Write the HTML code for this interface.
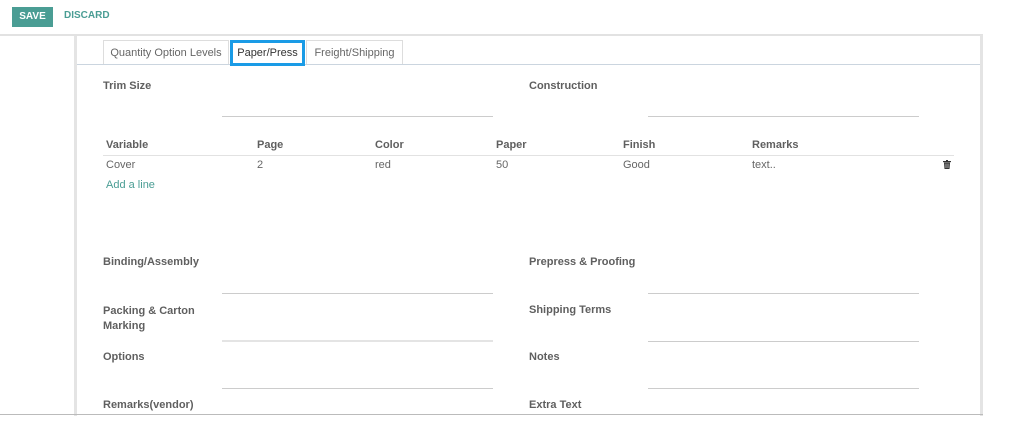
<!DOCTYPE html>
<html><head><meta charset="utf-8"><style>
body{margin:0;width:1016px;height:446px;background:#fff;font-family:"Liberation Sans",sans-serif;position:relative;overflow:hidden;color:#666}
.a{position:absolute}
.lbl{position:absolute;font-size:11px;font-weight:bold;color:#5f5f5f}
.ln{position:absolute;height:1px;background:#ccc}
.td{position:absolute;font-size:11px;color:#666}
.th{position:absolute;font-size:11px;font-weight:bold;color:#5f5f5f}
.tab{position:absolute;top:40px;height:24px;border:1px solid #ddd;border-bottom:none;font-size:11px;color:#666;text-align:center;line-height:24px;box-sizing:border-box;background:#fff}
</style></head><body>
<div class="a" style="left:12px;top:7px;width:41px;height:20px;background:#4a9d94;color:#fff;font-size:10px;font-weight:bold;text-align:center;line-height:20px">SAVE</div>
<div class="a" style="left:64px;top:10px;font-size:10px;font-weight:bold;color:#4a9d94">DISCARD</div>
<div class="a" style="left:0;top:34px;width:983px;height:2px;background:#e2e2e2"></div>
<div class="a" style="left:74px;top:36px;width:3px;height:380px;background:#e4e4e4"></div>
<div class="a" style="left:980px;top:35px;width:3px;height:381px;background:#e4e4e4"></div>
<div class="a" style="left:0;top:414px;width:983px;height:1px;background:#bbb"></div>
<div class="a" style="left:77px;top:64px;width:903px;height:1px;background:#cbd5df"></div>
<div class="tab" style="left:103px;width:126px">Quantity Option Levels</div>
<div class="tab" style="left:230px;top:40px;width:75px;height:26px;border:3px solid #1a9be6;color:#333;line-height:20px">Paper/Press</div>
<div class="tab" style="left:306px;width:97px">Freight/Shipping</div>
<div class="lbl" style="left:103px;top:80px">Trim Size</div>
<div class="ln" style="left:222px;top:116px;width:271px"></div>
<div class="lbl" style="left:529px;top:80px">Construction</div>
<div class="ln" style="left:648px;top:116px;width:271px"></div>
<div class="th" style="left:106px;top:139px">Variable</div>
<div class="th" style="left:257px;top:139px">Page</div>
<div class="th" style="left:375px;top:139px">Color</div>
<div class="th" style="left:496px;top:139px">Paper</div>
<div class="th" style="left:623px;top:139px">Finish</div>
<div class="th" style="left:752px;top:139px">Remarks</div>
<div class="ln" style="left:103px;top:155px;width:851px;background:#e2e2e2"></div>
<div class="td" style="left:106px;top:159px">Cover</div>
<div class="td" style="left:257px;top:159px">2</div>
<div class="td" style="left:375px;top:159px">red</div>
<div class="td" style="left:496px;top:159px">50</div>
<div class="td" style="left:623px;top:159px">Good</div>
<div class="td" style="left:752px;top:159px">text..</div>
<svg class="a" style="left:943px;top:160px" width="8" height="9" viewBox="0 0 8 9"><rect x="0" y="1" width="8" height="1.2" fill="#333"/><rect x="3" y="0" width="2" height="1" fill="#333"/><path d="M1 2.5h6l-.5 6.5h-5z" fill="#333"/><path d="M3 3.5v4.5M5 3.5v4.5" stroke="#fff" stroke-width=".6"/></svg>
<div class="td" style="left:106px;top:179px;color:#4a9d94">Add a line</div>
<div class="lbl" style="left:103px;top:256px">Binding/Assembly</div>
<div class="ln" style="left:222px;top:293px;width:271px"></div>
<div class="lbl" style="left:529px;top:256px">Prepress &amp; Proofing</div>
<div class="ln" style="left:648px;top:293px;width:271px"></div>
<div class="lbl" style="left:103px;top:304px;line-height:15px">Packing &amp; Carton<br>Marking</div>
<div class="ln" style="left:222px;top:340px;width:271px;height:2px;background:#e4e4e4"></div>
<div class="lbl" style="left:529px;top:304px">Shipping Terms</div>
<div class="ln" style="left:648px;top:341px;width:271px"></div>
<div class="lbl" style="left:103px;top:351px">Options</div>
<div class="ln" style="left:222px;top:388px;width:271px"></div>
<div class="lbl" style="left:529px;top:351px">Notes</div>
<div class="ln" style="left:648px;top:388px;width:271px"></div>
<div class="lbl" style="left:103px;top:399px">Remarks(vendor)</div>
<div class="lbl" style="left:529px;top:399px">Extra Text</div>
</body></html>
